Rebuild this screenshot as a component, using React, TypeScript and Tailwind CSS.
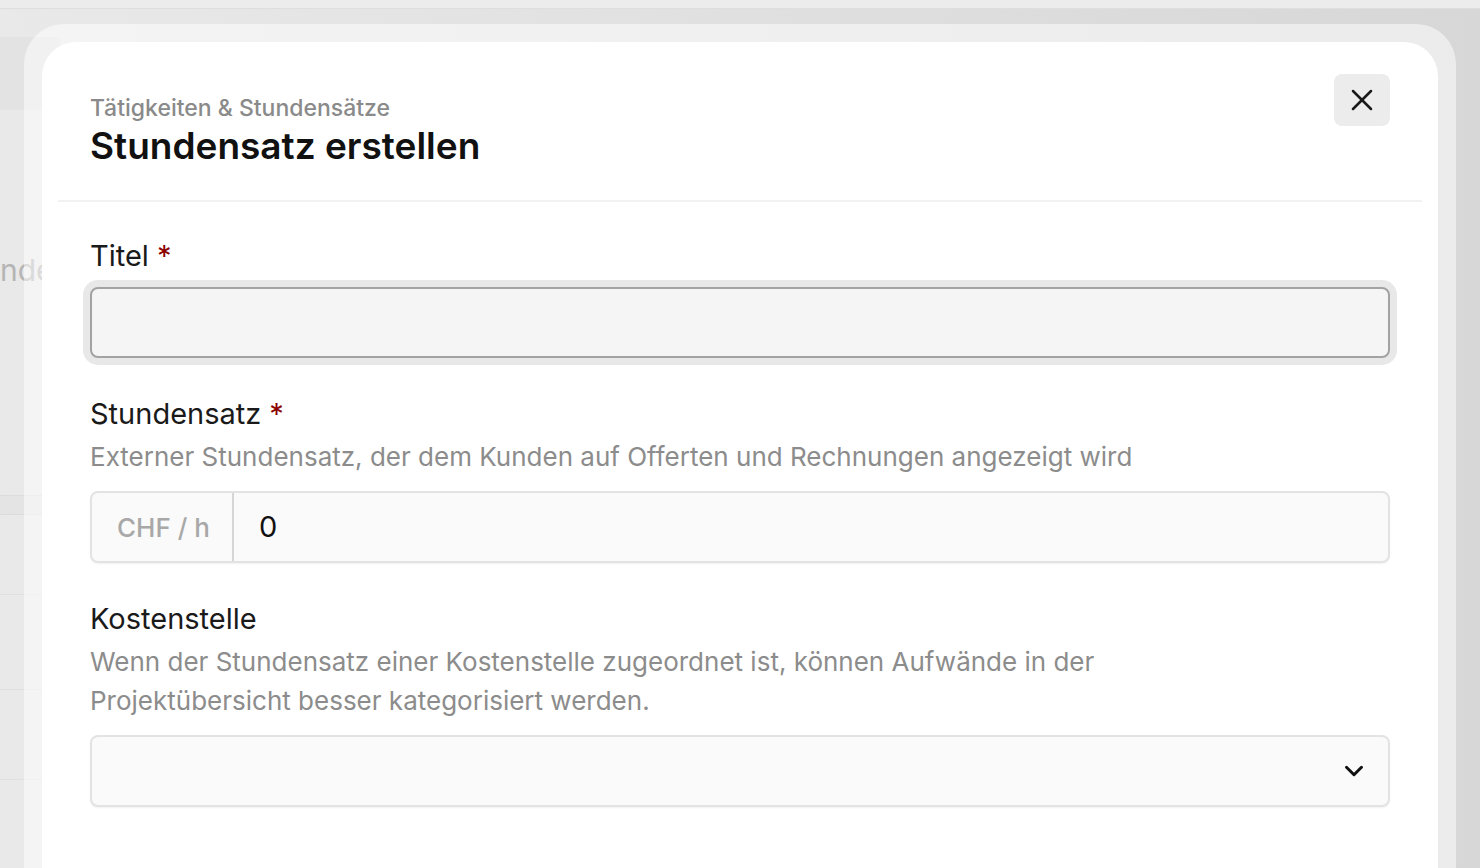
import React from "react";
import { X, ChevronDown } from "lucide-react";

function Req() {
	return <span className="ml-2 text-[#8b0000]">*</span>;
}

function Field({ label, required, desc, children }: { label: string; required?: boolean; desc?: string; children: React.ReactNode }) {
	return (
		<div className="flex flex-col">
			<div className="text-[29px] leading-[36px] text-[#1a1a1a]">
				{label}
				{required && <Req />}
			</div>
			{desc && <div className="mt-[5px] max-w-[1120px] text-[26px] leading-[39px] text-[#8c8c8c]">{desc}</div>}
			{children}
		</div>
	);
}

export default function App() {
	return (
		<div className="relative h-[868px] w-[1480px] overflow-hidden bg-gradient-to-r from-[#e9e9e9] to-[#d7d7d7] font-['Inter',sans-serif]">
			{/* Seite dahinter, nur am Rand sichtbar */}
			<div className="flex w-[60px] flex-col">
				<div className="h-[9px] w-[1480px] border-b border-[#dedede] bg-[#ececec]" />
				<div className="mt-[28px] h-[73px] w-[60px] bg-[#e3e3e3]" />
				<div className="mt-[140px] whitespace-nowrap text-[30px] leading-[40px] text-[#b5b5b5]">nden</div>
				<div className="mt-[205px] h-[20px] border-y border-[#dcdcdc] bg-[#e4e4e4]" />
				<div className="h-[80px] border-b border-[#e0e0e0]" />
				<div className="h-[95px] border-b border-[#e0e0e0]" />
				<div className="h-[90px] border-b border-[#e0e0e0]" />
			</div>

			{/* Modal */}
			<div className="absolute left-6 right-6 top-6 bottom-[-60px] rounded-[40px] bg-white/50 p-[18px]">
				<div className="h-full rounded-[34px] bg-white">
					<div className="mx-4 flex items-start justify-between border-b-2 border-[#f2f2f2] pl-8 pr-8 pt-8 pb-[32px]">
						<div className="pt-[19px]">
							<div className="text-[23px] font-medium leading-[30px] text-[#8a8a8a]">Tätigkeiten &amp; Stundensätze</div>
							<div className="mt-[1px] text-[37px] font-semibold leading-[44px] text-[#111]">Stundensatz erstellen</div>
						</div>
						<button className="flex h-[52px] w-[56px] items-center justify-center rounded-[8px] bg-[#ececec] text-[#1a1a1a]">
							<X size={36} strokeWidth={1.7} />
						</button>
					</div>

					<div className="flex flex-col gap-[38px] px-12 pt-[36px]">
						<Field label="Titel" required>
							<div className="mt-[13px] h-[71px] rounded-[8px] border-2 border-[#a3a3a3] bg-[#f5f5f5] shadow-[0_0_0_7px_#e8e8e8]" />
						</Field>

						<Field label="Stundensatz" required desc="Externer Stundensatz, der dem Kunden auf Offerten und Rechnungen angezeigt wird">
							<div className="mt-[15px] flex h-[72px] overflow-hidden rounded-[8px] border-2 border-[#e3e3e3] bg-[#fafafa] shadow-[0_1px_2px_rgba(0,0,0,0.06)]">
								<div className="flex w-[142px] items-center border-r-2 border-[#d6d6d6] pl-[25px] text-[26px] font-medium text-[#a8a8a8]">CHF / h</div>
								<div className="flex items-center pl-[25px] text-[29px] text-[#111]">0</div>
							</div>
						</Field>

						<Field label="Kostenstelle" desc="Wenn der Stundensatz einer Kostenstelle zugeordnet ist, können Aufwände in der Projektübersicht besser kategorisiert werden.">
							<div className="mt-[15px] flex h-[72px] items-center justify-end rounded-[8px] border-2 border-[#e3e3e3] bg-[#fafafa] pr-[19px] shadow-[0_1px_2px_rgba(0,0,0,0.06)]">
								<ChevronDown size={30} strokeWidth={2.4} className="text-[#111]" />
							</div>
						</Field>
					</div>
				</div>
			</div>
		</div>
	);
}
